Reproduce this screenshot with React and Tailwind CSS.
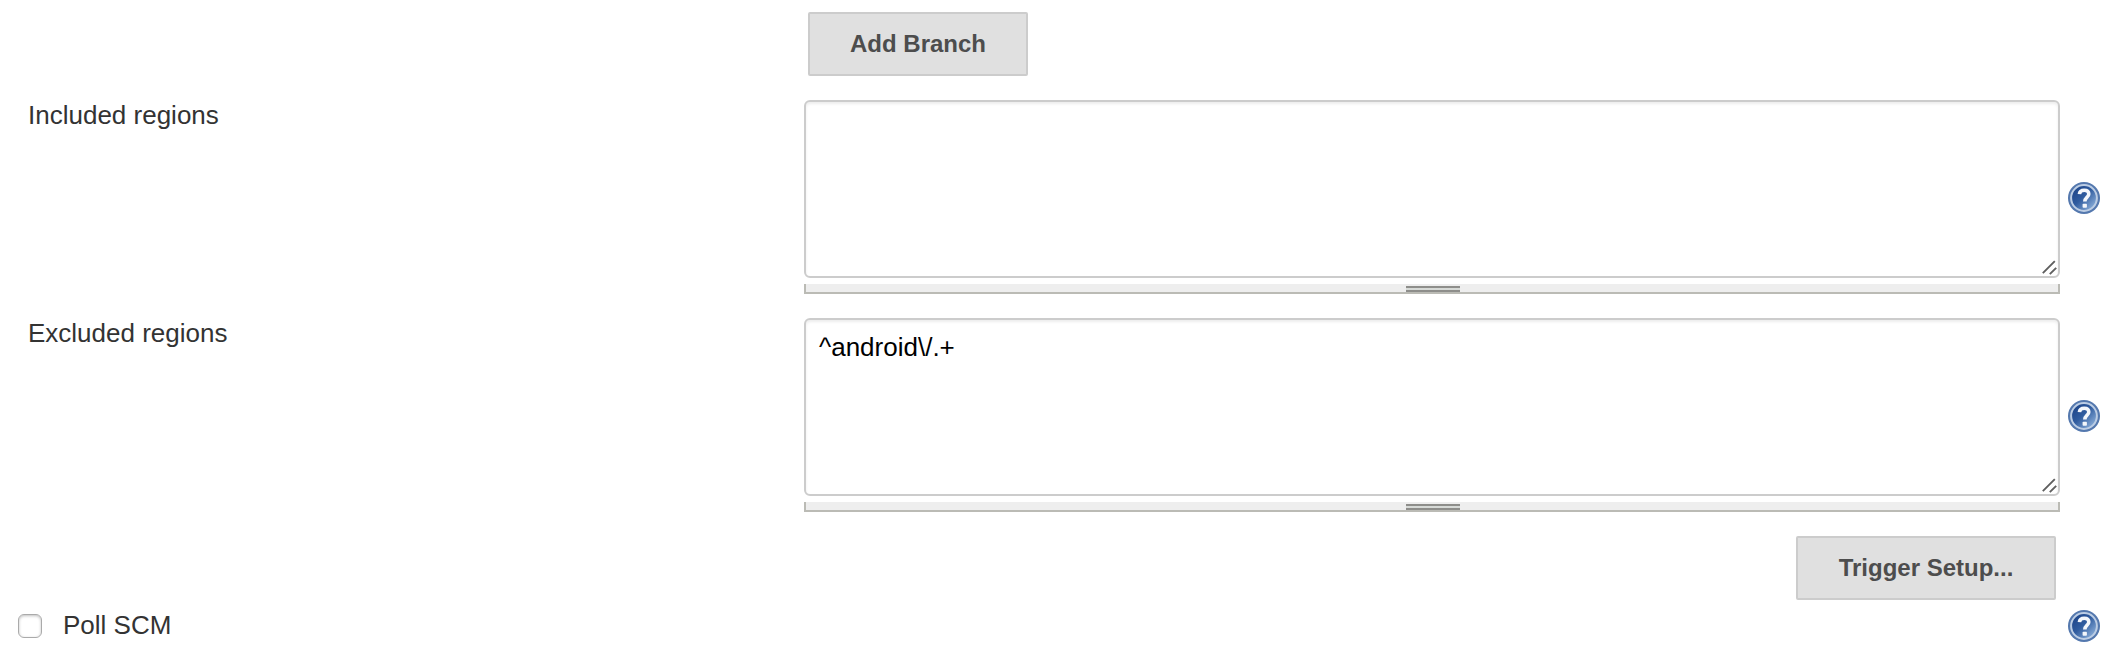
function HelpIcon({ id }) {
  return (
    <svg viewBox="0 0 32 32" className="block h-8 w-8 shrink-0" role="img" aria-label="Help">
      <defs>
        <linearGradient id={id} x1="0.1" y1="0.1" x2="0.9" y2="0.9">
          <stop offset="0" stopColor="#1d4488" />
          <stop offset="0.45" stopColor="#305c9f" />
          <stop offset="1" stopColor="#8fb2dc" />
        </linearGradient>
      </defs>
      <circle cx="16" cy="16" r="16" fill="#5478ae" />
      <circle cx="16" cy="16" r="12.9" fill={`url(#${id})`} stroke="#bccde4" strokeWidth="2" />
      <path
        d="M11.4 12.1C11.7 9.2 13.7 8.2 16.2 8.2C19 8.2 20.8 9.6 20.8 12C20.8 15.3 16.8 15.4 16.8 19.6"
        fill="none"
        stroke="#f4f7fb"
        strokeWidth="3.6"
      />
      <rect x="14.6" y="21.7" width="4.3" height="4" rx="0.8" fill="#f4f7fb" />
    </svg>
  );
}

function RegionRow({ label, value, id }) {
  return (
    <div className="flex h-[194px] items-start">
      <label htmlFor={id} className="w-[776px] shrink-0 leading-[30px] text-[#333333]">
        {label}
      </label>
      <div className="w-[1256px] shrink-0">
        <div className="relative h-[178px]">
          <textarea
            id={id}
            defaultValue={value}
            spellCheck={false}
            className="block h-[178px] w-full resize-none rounded-md border-2 border-[#cccccc] bg-white px-[13px] py-3 leading-[30px] text-black shadow-[inset_0_2px_3px_rgba(0,0,0,0.075)] outline-none"
          />
          <svg viewBox="0 0 16 16" className="absolute right-[2px] bottom-[3px] h-4 w-4">
            <path d="M0.8 14.2L12.8 2.2M7.8 15.2L14.2 8.8" stroke="#5f5f5f" strokeWidth="1.9" fill="none" />
          </svg>
        </div>
        <div className="mt-[6px] h-[10px] border-x-2 border-b-2 border-[#bbbbb5] bg-[#eeeeee] pt-[2px] pl-[600px]">
          <div className="h-[6px] w-[54px] border-y-2 border-[#8e8e8b] bg-[#d7dad7]" />
        </div>
      </div>
      <div className="ml-2 pt-[82px]">
        <HelpIcon id={`${id}-help`} />
      </div>
    </div>
  );
}

function Button({ children, className }) {
  return (
    <button
      type="button"
      className={`h-16 rounded-[2px] border-2 border-[#cccccc] bg-[#e0e0e0] text-2xl font-bold text-[#4d4d4d] ${className}`}
    >
      {children}
    </button>
  );
}

export default function App() {
  return (
    <main className="h-[654px] w-[2124px] overflow-hidden bg-white pt-3 font-['Liberation_Sans',Arial,sans-serif] text-[26px]">
      <div className="flex pl-[808px]">
        <Button className="w-[220px]">Add Branch</Button>
      </div>
      <div className="mt-6 flex flex-col gap-6 pl-7">
        <RegionRow id="included" label="Included regions" value="" />
        <RegionRow id="excluded" label="Excluded regions" value="^android\/.+" />
      </div>
      <div className="mt-6 flex justify-end pr-[68px]">
        <Button className="w-[260px]">Trigger Setup...</Button>
      </div>
      <div className="mt-[10px] flex h-8 items-center pr-6 pl-[18px]">
        <input
          id="poll"
          type="checkbox"
          className="h-6 w-6 appearance-none rounded-md border border-[#aaaaaa] bg-white shadow-[inset_0_1px_3px_rgba(0,0,0,0.25)]"
        />
        <label htmlFor="poll" className="ml-[21px] grow pb-[2px] leading-[30px] text-[#333333]">
          Poll SCM
        </label>
        <HelpIcon id="poll-help" />
      </div>
    </main>
  );
}
